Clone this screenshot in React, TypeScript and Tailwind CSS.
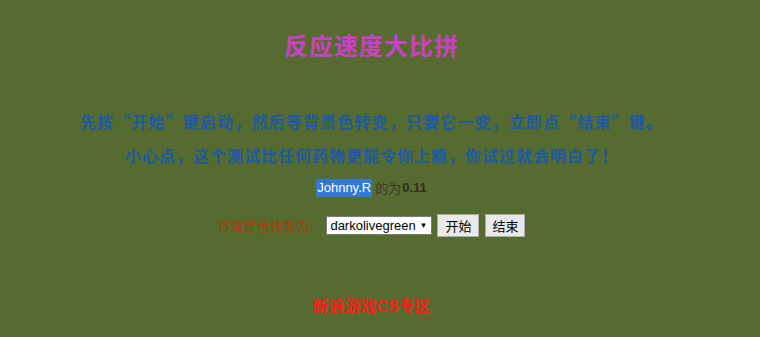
import React from "react"

const cjk = "font-['Noto_Sans_CJK_SC','Liberation_Sans',sans-serif]"

export default function App() {
  return (
    <div className="flex h-[337px] w-[760px] flex-col items-center bg-[#556b2f] pr-[17px] font-['Liberation_Sans','Noto_Sans_CJK_SC',sans-serif]">
      <h1 className={`mt-[30px] text-[24px] leading-[30px] font-bold tracking-[1px] text-[#cc3fcc] ${cjk}`}>
        反应速度大比拼
      </h1>

      <p className={`mt-[50px] text-[16px] leading-[22px] font-bold tracking-[1.15px] text-[#1d5aa3] ${cjk}`}>
        先按“开始”键启动，然后等背景色转变，只要它一变，立即点“结束”键。
      </p>
      <p className={`mt-[12px] text-[16px] leading-[22px] font-bold tracking-[1px] text-[#1d5aa3] ${cjk}`}>
        小心点，这个测试比任何药物更能令你上瘾，你试过就会明白了！
      </p>

      <div className="mt-[13px] flex items-center text-[13px] leading-[18px]">
        <span className="bg-[#3277d2] px-[1px] text-white">Johnny.R</span>
        <span className={`ml-[3px] text-[#3b3b2a] ${cjk}`}>的为</span>
        <span className="ml-[1px] font-bold text-[#2f2f22]">0.11</span>
      </div>

      <div className="mt-[17px] flex items-center">
        <span className={`mr-[4px] text-[13px] tracking-[0.1px] text-[#b13b0a] ${cjk}`}>将背景色转变为：</span>
        <div className="flex h-[19px] w-[106px] items-center justify-between border border-[#7a7a7a] bg-white pr-[4px] pl-[3px] text-[13px] text-black">
          <span>darkolivegreen</span>
          <span className="text-[8px]">▼</span>
        </div>
        <button className={`ml-[5px] h-[23px] w-[42px] border border-[#adadad] bg-[#e9e9e9] text-[13px] text-black ${cjk}`}>
          开始
        </button>
        <button className={`ml-[6px] h-[23px] w-[40px] border border-[#adadad] bg-[#e9e9e9] text-[13px] text-black ${cjk}`}>
          结束
        </button>
      </div>

      <p className="mt-[60px] text-[16px] leading-[20px] font-bold text-[#ff1a1a]">
        新浪游戏CS专区
      </p>
    </div>
  )
}
